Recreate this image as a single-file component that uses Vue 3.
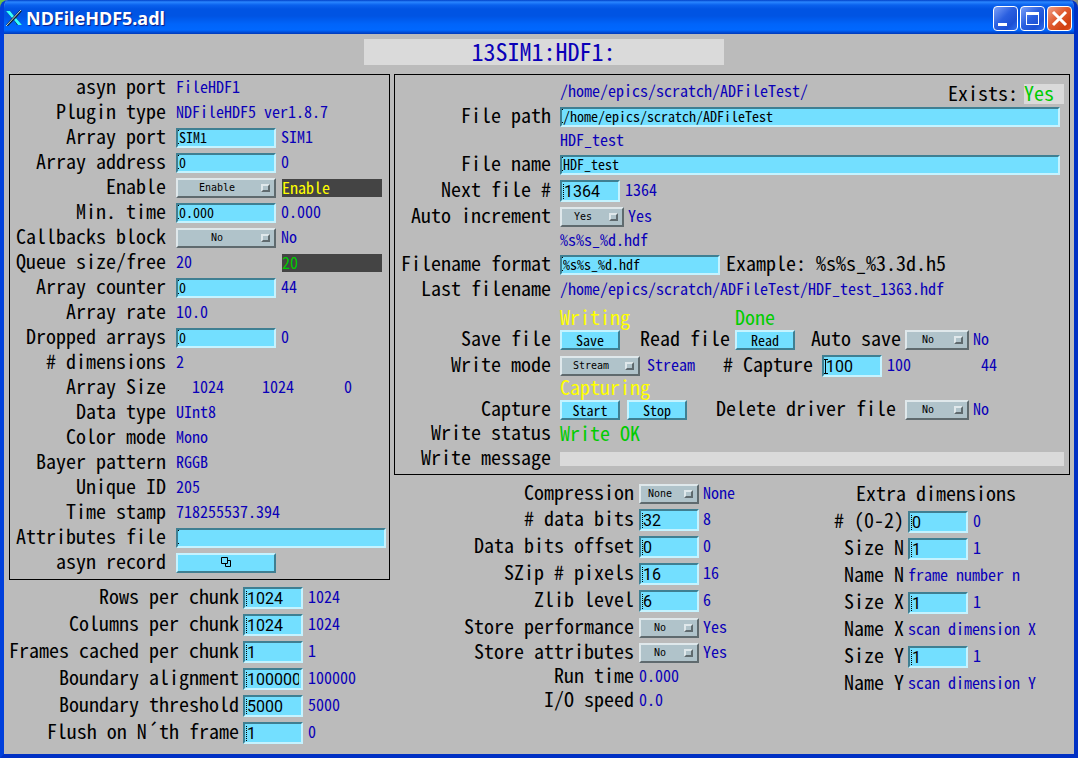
<script setup>
import { ref } from 'vue'

const plugin = ref([
  { label: 'asyn port', text: 'FileHDF1' },
  { label: 'Plugin type', text: 'NDFileHDF5 ver1.8.7' },
  { label: 'Array port', input: 'SIM1', value: 'SIM1' },
  { label: 'Array address', input: '0', value: '0' },
  { label: 'Enable', menu: 'Enable', options: ['Enable', 'Disable'], value: 'Enable', tone: 'warn' },
  { label: 'Min. time', input: '0.000', value: '0.000' },
  { label: 'Callbacks block', menu: 'No', options: ['No', 'Yes'], value: 'No' },
  { label: 'Queue size/free', text: '20', value: '20', tone: 'good' },
  { label: 'Array counter', input: '0', value: '44' },
  { label: 'Array rate', text: '10.0' },
  { label: 'Dropped arrays', input: '0', value: '0' },
  { label: '# dimensions', text: '2' },
  { label: 'Array Size', sizes: ['1024', '1024', '0'] },
  { label: 'Data type', text: 'UInt8' },
  { label: 'Color mode', text: 'Mono' },
  { label: 'Bayer pattern', text: 'RGGB' },
  { label: 'Unique ID', text: '205' },
  { label: 'Time stamp', text: '718255537.394' },
  { label: 'Attributes file', input: '', wide: true },
  { label: 'asyn record', related: true },
])

const chunks = ref([
  { label: 'Rows per chunk', input: '1024', value: '1024' },
  { label: 'Columns per chunk', input: '1024', value: '1024' },
  { label: 'Frames cached per chunk', input: '1', value: '1' },
  { label: 'Boundary alignment', input: '100000', value: '100000' },
  { label: 'Boundary threshold', input: '5000', value: '5000' },
  { label: 'Flush on N´th frame', input: '1', value: '0' },
])

const storage = ref([
  { label: 'Compression', menu: 'None', options: ['None', 'N-bit', 'szip', 'zlib'], value: 'None' },
  { label: '# data bits', input: '32', value: '8' },
  { label: 'Data bits offset', input: '0', value: '0' },
  { label: 'SZip # pixels', input: '16', value: '16' },
  { label: 'Zlib level', input: '6', value: '6' },
  { label: 'Store performance', menu: 'No', options: ['No', 'Yes'], value: 'Yes' },
  { label: 'Store attributes', menu: 'No', options: ['No', 'Yes'], value: 'Yes' },
  { label: 'Run time', text: '0.000' },
  { label: 'I/O speed', text: '0.0' },
])

const extra = ref([
  { label: '# (0-2)', input: '0', value: '0' },
  { label: 'Size N', input: '1', value: '1' },
  { label: 'Name N', text: 'frame number n' },
  { label: 'Size X', input: '1', value: '1' },
  { label: 'Name X', text: 'scan dimension X' },
  { label: 'Size Y', input: '1', value: '1' },
  { label: 'Name Y', text: 'scan dimension Y' },
])

const file = ref({
  path: '/home/epics/scratch/ADFileTest',
  name: 'HDF_test',
  next: '1364',
  increment: 'Yes',
  format: '%s%s_%d.hdf',
  autoSave: 'No',
  mode: 'Stream',
  capture: '100',
  deleteDriver: 'No',
})
</script>

<template>
  <div class="window">
    <header class="titlebar">
      <svg class="app-icon" width="18" height="18" viewBox="0 0 18 18" aria-hidden="true">
        <path d="M1 2h4l4 5 6-6 2 1-6 7 6 7h-5l-3-5-6 6-2-1 6-7z" fill="#123" />
        <path d="M1 2h4l4 5-2 2zM9 11l2-2 6 7h-4z" fill="#3ff" />
        <path d="M16 1L1 17" stroke="#cdd" stroke-width="1" />
      </svg>
      <h1 class="caption">NDFileHDF5.adl</h1>
      <div class="win-buttons">
        <button class="win-btn" type="button" aria-label="Minimize">
          <svg width="23" height="23" viewBox="0 0 23 23"><rect x="4" y="16" width="9" height="3" fill="#fff" /></svg>
        </button>
        <button class="win-btn" type="button" aria-label="Maximize">
          <svg width="23" height="23" viewBox="0 0 23 23"><path d="M5 5h13v13H5zM6 8v9h11V8z" fill="#fff" fill-rule="evenodd" /></svg>
        </button>
        <button class="win-btn close" type="button" aria-label="Close">
          <svg width="23" height="23" viewBox="0 0 23 23"><path d="M5 5l13 13M18 5L5 18" stroke="#fff" stroke-width="3" /></svg>
        </button>
      </div>
    </header>

    <main class="client">
      <h2 class="device">13SIM1:HDF1:</h2>

      <div class="columns">
        <div class="left">
          <section class="panel plugin">
            <div v-for="(row, i) in plugin" :key="row.label" class="row">
              <label class="label" :for="'plugin-' + i">{{ row.label }}</label>
              <input v-if="row.input !== undefined" :id="'plugin-' + i" v-model="row.input" class="entry" :class="{ wide: row.wide }" type="text">
              <span v-else-if="row.menu" class="menu">
                <select :id="'plugin-' + i" v-model="row.menu">
                  <option v-for="o in row.options" :key="o">{{ o }}</option>
                </select>
              </span>
              <span v-else-if="row.sizes" class="sizes">
                <output v-for="(s, n) in row.sizes" :key="n" class="value">{{ s }}</output>
              </span>
              <button v-else-if="row.related" :id="'plugin-' + i" class="push" type="button" aria-label="asyn record">
                <svg width="11" height="11" viewBox="0 0 11 11" fill="none" stroke="#000"><path d="M.5.5h6v6h-6zM4.500 6.500v3h5v-6h-3" /></svg>
              </button>
              <output v-else :id="'plugin-' + i" class="value slot">{{ row.text }}</output>
              <output v-if="row.value" class="value readback" :class="row.tone">{{ row.value }}</output>
            </div>
          </section>

          <section class="chunks">
            <div v-for="(row, i) in chunks" :key="row.label" class="row">
              <label class="label" :for="'chunk-' + i">{{ row.label }}</label>
              <input :id="'chunk-' + i" v-model="row.input" class="entry tall" type="text">
              <output class="value readback">{{ row.value }}</output>
            </div>
          </section>
        </div>

        <div class="right">
          <section class="panel file">
            <div class="row first">
              <span class="label"></span>
              <output class="value">/home/epics/scratch/ADFileTest/</output>
              <span class="exists">
                <span class="text">Exists:</span>
                <output class="flag">Yes</output>
              </span>
            </div>
            <div class="row">
              <label class="label" for="path">File path</label>
              <input id="path" v-model="file.path" class="entry fill" type="text">
            </div>
            <div class="row echo">
              <span class="label"></span>
              <output class="value">HDF_test</output>
            </div>
            <div class="row">
              <label class="label" for="name">File name</label>
              <input id="name" v-model="file.name" class="entry fill" type="text">
            </div>
            <div class="row">
              <label class="label" for="next">Next file #</label>
              <input id="next" v-model="file.next" class="entry tall" type="text">
              <output class="value readback">1364</output>
            </div>
            <div class="row">
              <label class="label" for="inc">Auto increment</label>
              <span class="menu small">
                <select id="inc" v-model="file.increment"><option>No</option><option>Yes</option></select>
              </span>
              <output class="value readback near">Yes</output>
            </div>
            <div class="row echo">
              <span class="label"></span>
              <output class="value">%s%s_%d.hdf</output>
            </div>
            <div class="row">
              <label class="label" for="format">Filename format</label>
              <input id="format" v-model="file.format" class="entry format" type="text">
              <span class="text example">Example: %s%s_%3.3d.h5</span>
            </div>
            <div class="row last">
              <span class="label">Last filename</span>
              <output class="value">/home/epics/scratch/ADFileTest/HDF_test_1363.hdf</output>
            </div>
            <div class="row status">
              <span class="label"></span>
              <output class="state writing">Writing</output>
              <output class="state done">Done</output>
            </div>
            <div class="row">
              <span class="label">Save file</span>
              <button class="push short" type="button">Save</button>
              <span class="text read">Read file</span>
              <button class="push short" type="button">Read</button>
              <label class="text auto" for="autosave">Auto save</label>
              <span class="menu small">
                <select id="autosave" v-model="file.autoSave"><option>No</option><option>Yes</option></select>
              </span>
              <output class="value readback near">No</output>
            </div>
            <div class="row">
              <label class="label" for="mode">Write mode</label>
              <span class="menu medium">
                <select id="mode" v-model="file.mode"><option>Single</option><option>Capture</option><option>Stream</option></select>
              </span>
              <output class="value mode">Stream</output>
              <label class="text number" for="capture"># Capture</label>
              <input id="capture" v-model="file.capture" class="entry tall active" type="text">
              <output class="value readback count">100</output>
              <output class="value">44</output>
            </div>
            <div class="row tight">
              <span class="label"></span>
              <output class="state">Capturing</output>
            </div>
            <div class="row">
              <span class="label">Capture</span>
              <button class="push short" type="button">Start</button>
              <button class="push short stop" type="button">Stop</button>
              <label class="text delete" for="delete">Delete driver file</label>
              <span class="menu small">
                <select id="delete" v-model="file.deleteDriver"><option>No</option><option>Yes</option></select>
              </span>
              <output class="value readback near">No</output>
            </div>
            <div class="row echo">
              <span class="label">Write status</span>
              <output class="state done">Write OK</output>
            </div>
            <div class="row message">
              <span class="label">Write message</span>
              <output class="message-bar"></output>
            </div>
          </section>

          <div class="lower">
            <section class="storage">
              <div v-for="(row, i) in storage" :key="row.label" class="row" :class="{ field: row.input, plain: row.text }">
                <label class="label" :for="'storage-' + i">{{ row.label }}</label>
                <input v-if="row.input" :id="'storage-' + i" v-model="row.input" class="entry tall" type="text">
                <span v-else-if="row.menu" class="menu short">
                  <select :id="'storage-' + i" v-model="row.menu">
                    <option v-for="o in row.options" :key="o">{{ o }}</option>
                  </select>
                </span>
                <output v-else :id="'storage-' + i" class="value">{{ row.text }}</output>
                <output v-if="row.value" class="value readback near">{{ row.value }}</output>
              </div>
            </section>

            <section class="extra">
              <h3 class="text heading">Extra dimensions</h3>
              <div v-for="(row, i) in extra" :key="row.label" class="row">
                <label class="label" :for="'extra-' + i">{{ row.label }}</label>
                <input v-if="row.input" :id="'extra-' + i" v-model="row.input" class="entry tall" type="text">
                <output v-else :id="'extra-' + i" class="value">{{ row.text }}</output>
                <output v-if="row.value" class="value readback">{{ row.value }}</output>
              </div>
            </section>
          </div>
        </div>
      </div>
    </main>
  </div>
</template>

<style>
body {
  margin: 0;
  background: linear-gradient(90deg, #6cc04a 50%, #8b8f80 50%);
}
</style>

<style scoped>
.window {
  --mono: "Noto Sans Mono CJK JP", "Noto Sans Mono CJK SC", "Liberation Mono", monospace;
  box-sizing: border-box;
  min-height: 100vh;
  display: flex;
  flex-direction: column;
  border: solid;
  border-width: 0 4px 4px;
  border-color: #0040dc #0030c4 #0030c4 #0040dc;
  border-radius: 8px 8px 0 0;
  background: #bbb;
  font-family: var(--mono);
  color: #000;
  overflow: hidden;
}
.titlebar {
  display: flex;
  align-items: center;
  height: 34px;
  margin: 0 -4px;
  padding: 2px 6px 0 5px;
  box-sizing: border-box;
  background: linear-gradient(#0040c8 0, #2a86ff 2px, #0a62ee 5px, #0054e3 9px, #0054e3 16px, #0064fa 24px, #0068ff 30px, #0050dc 32px, #0038b8 34px);
}
.app-icon {
  flex: none;
}
.caption {
  flex: 1;
  margin: 0 0 0 3px;
  font: bold 18px/24px "Noto Sans", sans-serif;
  color: #fff;
  text-shadow: 1px 1px 1px #0a1883;
}
.win-buttons {
  display: flex;
  gap: 2px;
}
.win-btn {
  width: 25px;
  height: 25px;
  padding: 0;
  border: 1px solid #fff;
  border-radius: 4px;
  background: linear-gradient(135deg, #7ba0f8, #2a5fe0 45%, #1c50d4 75%, #2f70f0);
}
.win-btn svg {
  display: block;
}
.win-btn.close {
  background: linear-gradient(135deg, #f0a088, #e05a30 45%, #d04010 80%, #e05020);
}
.client {
  flex: 1;
  padding: 5px 4px 5px 5px;
}
.device {
  width: 360px;
  height: 26px;
  margin: 0 0 0 calc(50% - 176px);
  background: #dadada;
  color: #0a00b8;
  font-size: 24px;
  line-height: 24px;
  font-weight: normal;
  text-align: center;
}
.columns {
  display: grid;
  grid-template-columns: 381px 1fr;
  gap: 4px;
  margin-top: 9px;
}
.panel {
  border: 1px solid #000;
}
.row {
  display: flex;
  align-items: center;
  height: 26px;
}
.label,
.text {
  padding-bottom: 4px;
  font-size: 20px;
  line-height: 20px;
  font-weight: normal;
  white-space: pre;
}
.label {
  flex: none;
  width: 156px;
  margin-right: 9px;
  text-align: right;
}
.value {
  padding-bottom: 4px;
  font-size: 16px;
  line-height: 18px;
  color: #0a00b8;
  white-space: pre;
}
.readback {
  margin-left: 5px;
}
.readback.near {
  margin-left: 4px;
}
.warn,
.good {
  width: 100px;
  height: 18px;
  margin-left: 6px;
  padding: 0;
  background: #444;
  line-height: 16px;
}
.warn {
  color: #ff0;
}
.good {
  color: #0c0;
}
.entry {
  box-sizing: border-box;
  width: 100px;
  height: 20px;
  padding: 0 1px 2px;
  border: 2px solid;
  border-color: #3f7f92 #c5f3ff #c5f3ff #3f7f92;
  border-radius: 0;
  background:
    linear-gradient(#000, #000) 0 0 / 1px 1px no-repeat,
    linear-gradient(#000, #000) 0 13px / 1px 1px no-repeat,
    #73dfff;
  color: #000;
  font: 14px/14px var(--mono);
}
.entry.tall {
  width: 60px;
  height: 22px;
  padding: 1px 2px 0;
  font: 16px/16px Roboto, sans-serif;
  background:
    repeating-linear-gradient(#000 0 1px, transparent 1px 2px) 1px 2px / 1px 15px no-repeat,
    #73dfff;
}
.entry.tall.active {
  background:
    linear-gradient(#000, #000) 1px 2px / 1px 15px no-repeat,
    linear-gradient(#000, #000) 0 2px / 4px 1px no-repeat,
    linear-gradient(#000, #000) 0 16px / 4px 1px no-repeat,
    #73dfff;
}
.entry.wide {
  width: 210px;
}
.entry.fill {
  flex: 1;
  min-width: 0;
  margin-right: 9px;
}
.entry.format {
  width: 160px;
}
.menu {
  position: relative;
  flex: none;
  width: 100px;
  height: 20px;
}
.menu select {
  display: block;
  box-sizing: border-box;
  width: 100%;
  height: 20px;
  padding: 0 18px 0 0;
  appearance: none;
  border: 2px solid;
  border-color: #dfe8eb #5f6a6e #5f6a6e #dfe8eb;
  border-radius: 0;
  background: #b0c3ca;
  color: #000;
  font: 10px/14px "DejaVu Sans Mono", monospace;
  text-align: center;
  text-align-last: center;
}
.menu::after {
  content: "";
  position: absolute;
  right: 6px;
  top: 6px;
  box-sizing: border-box;
  width: 9px;
  height: 8px;
  border: 2px solid;
  border-color: #dfe8eb #5f6a6e #5f6a6e #dfe8eb;
  pointer-events: none;
}
.menu.small {
  width: 64px;
}
.menu.medium {
  width: 80px;
}
.menu.short {
  width: 60px;
}
.push {
  box-sizing: border-box;
  flex: none;
  width: 100px;
  height: 20px;
  padding: 0;
  border: 2px solid;
  border-color: #c5f3ff #3f7f92 #3f7f92 #c5f3ff;
  border-radius: 0;
  background: #73dfff;
  color: #000;
  font: 14px/16px var(--mono);
}
.push svg {
  display: block;
  margin: 0 auto;
}
.push.short {
  width: 60px;
}
.plugin {
  padding-bottom: 4px;
}
.plugin .row {
  height: 25px;
}
.plugin .label {
  margin-right: 10px;
}
.slot {
  min-width: 100px;
}
.sizes {
  display: grid;
  grid-template-columns: 48px 70px 58px;
  text-align: right;
}
.chunks {
  padding-top: 5px;
}
.chunks .row,
.extra .row,
.storage .row.field {
  box-sizing: border-box;
  height: 27px;
  padding-bottom: 1px;
}
.chunks .label {
  width: 230px;
  margin-right: 4px;
}
.file {
  padding: 5px 0 1px;
}
.row.first,
.row.last {
  height: 24px;
}
.row.echo {
  height: 22px;
}
.row.tight {
  height: 18px;
}
.row.status {
  height: 25px;
  align-items: flex-end;
}
.row.message {
  height: 28px;
}
.exists {
  display: flex;
  align-items: center;
  gap: 6px;
  margin: 4px 5px 0 auto;
}
.exists .text {
  padding-bottom: 2px;
}
.flag {
  width: 40px;
  height: 20px;
  background: #dadada;
  color: #0c0;
  font-size: 20px;
  line-height: 18px;
}
.state {
  padding-bottom: 2px;
  font-size: 20px;
  line-height: 20px;
  color: #ff0;
}
.status .state {
  padding-bottom: 0;
}
.state.writing {
  width: 175px;
}
.state.done {
  color: #0c0;
}
.example {
  margin-left: 6px;
}
.read {
  margin: 0 5px 0 20px;
}
.auto {
  margin: 0 4px 0 16px;
}
.mode {
  width: 76px;
  margin-left: 7px;
}
.number {
  margin-right: 9px;
}
.count {
  width: 94px;
}
.stop {
  margin-left: 7px;
}
.delete {
  margin: 0 9px 0 29px;
}
.message-bar {
  flex: 1;
  height: 14px;
  margin-right: 5px;
  background: #dadada;
}
.lower {
  display: flex;
  justify-content: space-between;
  padding-top: 6px;
}
.storage .label {
  width: 240px;
  margin-right: 5px;
}
.storage .row {
  height: 25px;
}
.storage .row:first-child {
  height: 26px;
}
.storage .row.plain {
  height: 24px;
}
.extra {
  width: 236px;
}
.extra .heading {
  width: 204px;
  margin: 0;
  line-height: 24px;
  text-align: center;
}
.extra .label {
  width: 70px;
  margin-right: 4px;
}
</style>
